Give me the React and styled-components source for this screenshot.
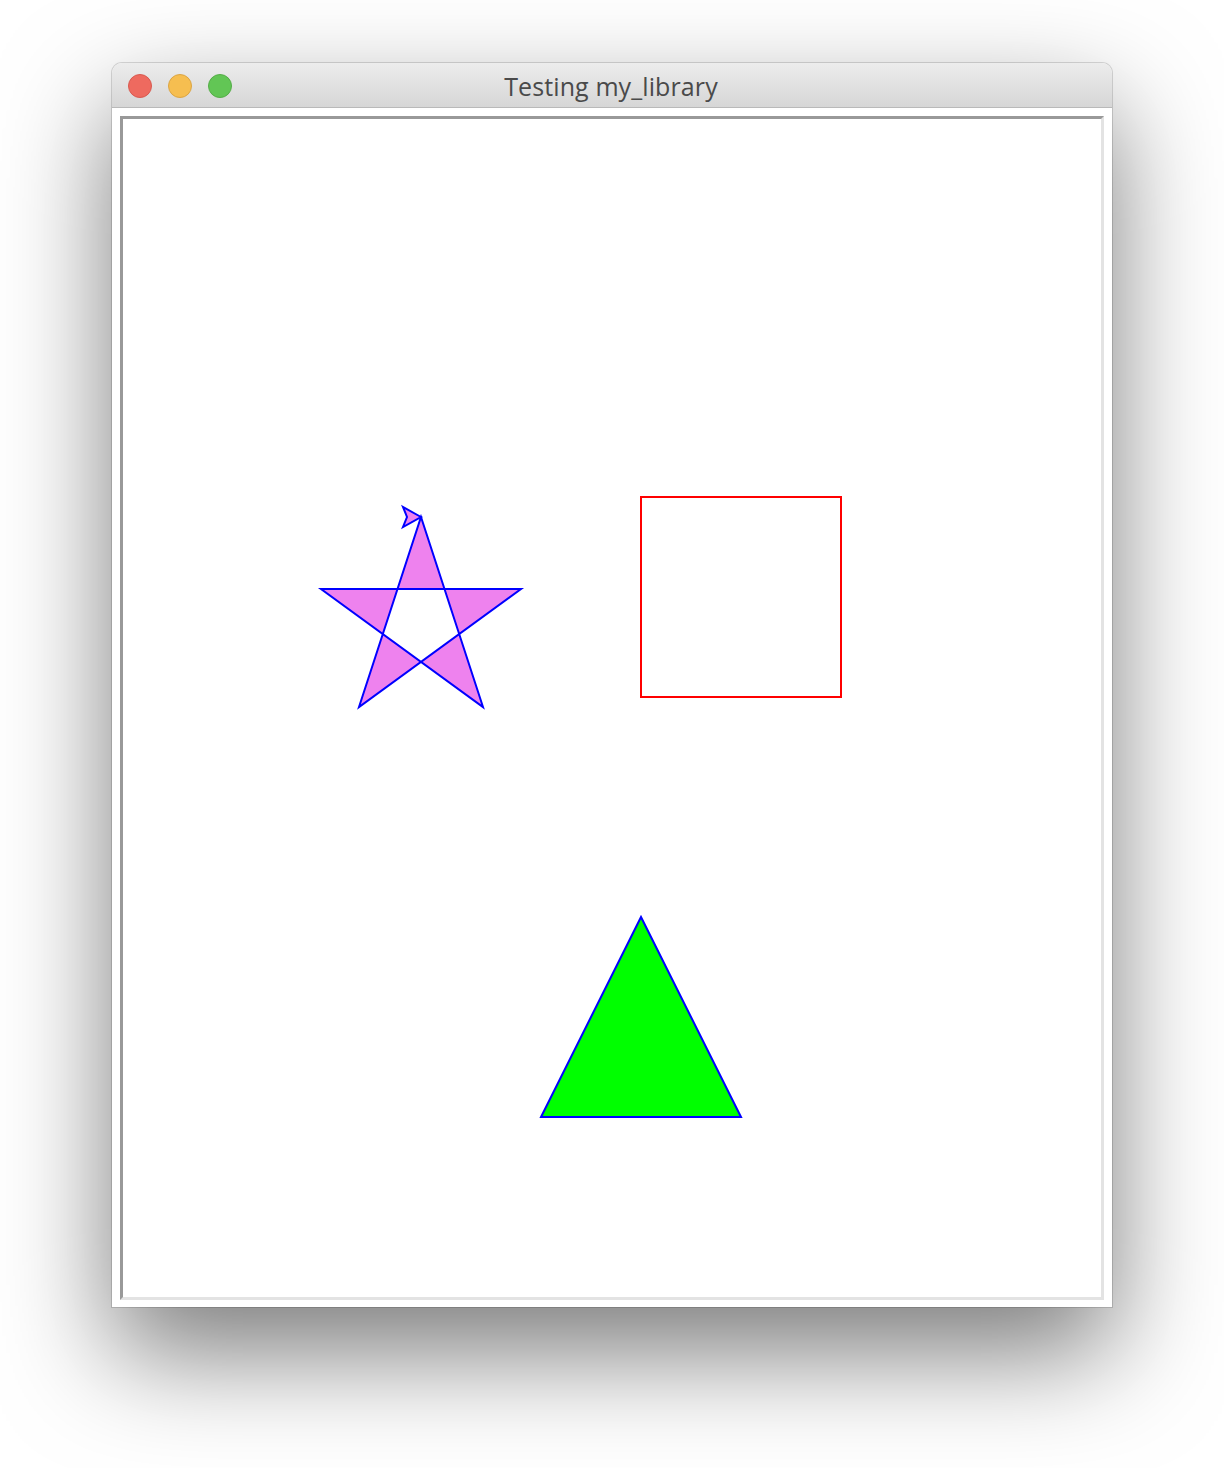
import React from 'react';
import styled, { createGlobalStyle } from 'styled-components';

const GlobalStyle = createGlobalStyle`
  html, body {
    margin: 0;
    padding: 0;
    background: #ffffff;
  }
  body {
    font-family: 'Liberation Sans', Arial, sans-serif;
  }
`;

const Desktop = styled.div`
  width: 1224px;
  height: 1468px;
  padding: 63px 0 0 112px;
  box-sizing: border-box;
  background: #ffffff;
`;

const Window = styled.div`
  width: 1000px;
  height: 1244px;
  display: flex;
  flex-direction: column;
  border-radius: 10px 10px 0 0;
  background: #ffffff;
  box-shadow: 0 46px 110px rgba(0, 0, 0, 0.52), 0 0 0 1px rgba(0, 0, 0, 0.14);
`;

const TitleBar = styled.div`
  position: relative;
  height: 44px;
  flex-shrink: 0;
  display: flex;
  align-items: center;
  justify-content: center;
  border-radius: 10px 10px 0 0;
  background: linear-gradient(to bottom, #ececec, #d6d6d6);
  border-bottom: 1px solid #b9b9b9;
`;

const Lights = styled.div`
  position: absolute;
  left: 16px;
  top: 11px;
  display: flex;
  gap: 16px;
`;

const Light = styled.span`
  width: 22px;
  height: 22px;
  border-radius: 50%;
  background: ${p => p.fill};
  border: 1px solid ${p => p.edge};
`;

const Title = styled.span`
  font-family: 'Open Sans', 'Liberation Sans', sans-serif;
  font-size: 25px;
  color: #4a4a4a;
  letter-spacing: 0.1px;
  padding-top: 2px;
  margin-left: -2px;
`;

const Content = styled.div`
  flex: 1;
  padding: 8px 8px 7px 8px;
  display: flex;
`;

const Frame = styled.div`
  flex: 1;
  border-style: solid;
  border-width: 3px;
  border-color: #999999 #e3e3e3 #e3e3e3 #999999;
  background: #ffffff;
  display: flex;
`;

const Canvas = styled.svg`
  display: block;
  width: 977px;
  height: 1177px;
`;

// turtle drawings, in page coordinates
const star = 'M421 517 L483 707 L321 589 L521 589 L359 707 Z';
const arrow = 'M421 517 L403 507 L407 517 L403 527 Z';

export default function App() {
  return (
    <>
      <GlobalStyle />
      <Desktop>
        <Window>
          <TitleBar>
            <Lights>
              <Light fill="#ee6a5f" edge="#d85a50" />
              <Light fill="#f6be50" edge="#dba544" />
              <Light fill="#62c655" edge="#55ad48" />
            </Lights>
            <Title>Testing my_library</Title>
          </TitleBar>
          <Content>
            <Frame>
              <Canvas viewBox="123 119 977 1177">
                <path
                  d={star}
                  fill="#ee82ee"
                  fillRule="evenodd"
                  stroke="#0000ff"
                  strokeWidth="2"
                  strokeLinejoin="miter"
                />
                <path d={arrow} fill="#ee82ee" stroke="#0000ff" strokeWidth="2" />
                <rect x="641" y="497" width="200" height="200" fill="none" stroke="#ff0000" strokeWidth="2" />
                <path d="M641 917 L741 1117 L541 1117 Z" fill="#00ff00" stroke="#0000ff" strokeWidth="2" />
              </Canvas>
            </Frame>
          </Content>
        </Window>
      </Desktop>
    </>
  );
}
